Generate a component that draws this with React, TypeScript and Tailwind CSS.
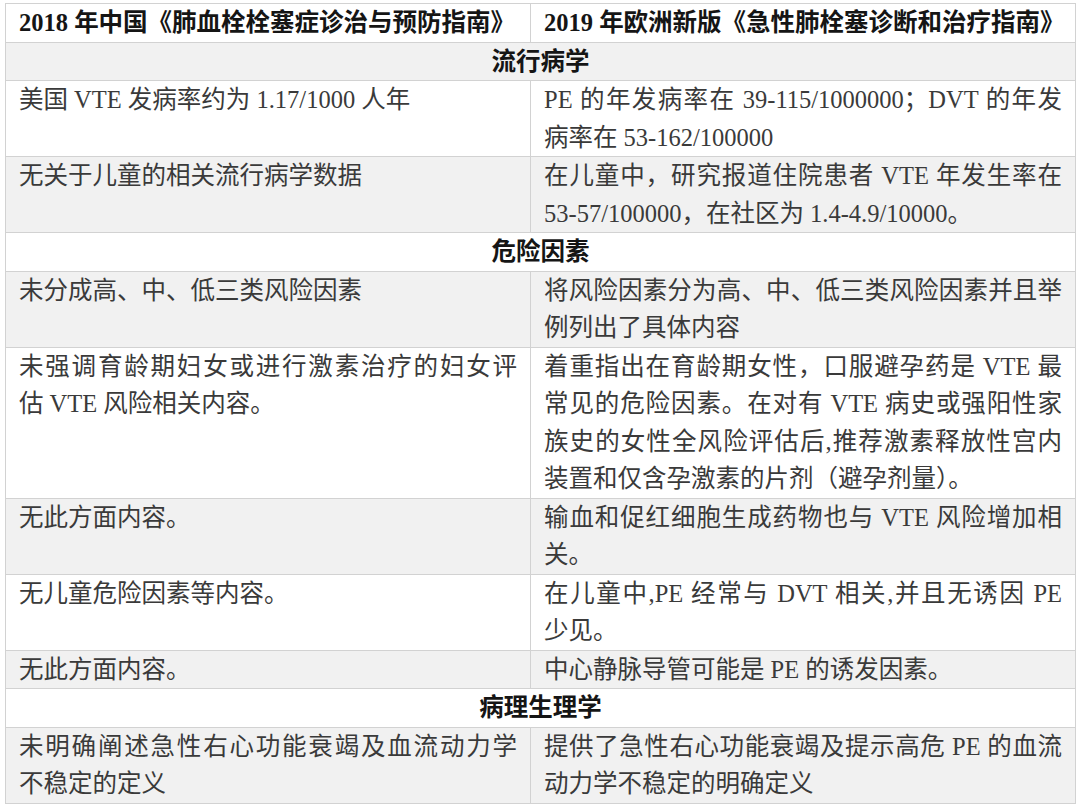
import React from 'react';

type Row =
  | { kind: 'section'; title: string }
  | { kind: 'pair'; left: string[]; right: string[] };

// Each inner array is one printed line, so the breaks match the source table
const rows: Row[] = [
  { kind: 'section', title: '流行病学' },
  {
    kind: 'pair',
    left: ['美国 VTE 发病率约为 1.17/1000 人年'],
    right: ['PE 的年发病率在 39-115/1000000；DVT 的年发', '病率在 53-162/100000'],
  },
  {
    kind: 'pair',
    left: ['无关于儿童的相关流行病学数据'],
    right: ['在儿童中，研究报道住院患者 VTE 年发生率在', '53-57/100000，在社区为 1.4-4.9/10000。'],
  },
  { kind: 'section', title: '危险因素' },
  {
    kind: 'pair',
    left: ['未分成高、中、低三类风险因素'],
    right: ['将风险因素分为高、中、低三类风险因素并且举', '例列出了具体内容'],
  },
  {
    kind: 'pair',
    left: ['未强调育龄期妇女或进行激素治疗的妇女评', '估 VTE 风险相关内容。'],
    right: [
      '着重指出在育龄期女性，口服避孕药是 VTE 最',
      '常见的危险因素。在对有 VTE 病史或强阳性家',
      '族史的女性全风险评估后,推荐激素释放性宫内',
      '装置和仅含孕激素的片剂（避孕剂量）。',
    ],
  },
  {
    kind: 'pair',
    left: ['无此方面内容。'],
    right: ['输血和促红细胞生成药物也与 VTE 风险增加相', '关。'],
  },
  {
    kind: 'pair',
    left: ['无儿童危险因素等内容。'],
    right: ['在儿童中,PE 经常与 DVT 相关,并且无诱因 PE', '少见。'],
  },
  {
    kind: 'pair',
    left: ['无此方面内容。'],
    right: ['中心静脉导管可能是 PE 的诱发因素。'],
  },
  { kind: 'section', title: '病理生理学' },
  {
    kind: 'pair',
    left: ['未明确阐述急性右心功能衰竭及血流动力学', '不稳定的定义'],
    right: ['提供了急性右心功能衰竭及提示高危 PE 的血流', '动力学不稳定的明确定义'],
  },
];

const Lines: React.FC<{ lines: string[] }> = ({ lines }) => (
  <>
    {lines.map((line, i) => (
      <div
        key={i}
        className={i < lines.length - 1 ? 'text-justify [text-align-last:justify]' : 'text-left'}
      >
        {line}
      </div>
    ))}
  </>
);

export default function App() {
  const cell = 'border border-[#d2d2d2] px-[13px] py-0 align-top';

  return (
    <div className="min-h-screen bg-white pt-[3px] pl-[5px] font-['Liberation_Serif','Noto_Sans_CJK_SC',serif] text-[24.5px] leading-[37.5px] text-[#3a3a3a]">
      <table className="w-[1070px] table-fixed border-collapse">
        <colgroup>
          <col className="w-[525px]" />
          <col className="w-[545px]" />
        </colgroup>
        <tbody>
          <tr className="bg-white">
            <th className={`${cell} whitespace-nowrap text-left font-bold text-[#151515]`}>
              2018 年中国《肺血栓栓塞症诊治与预防指南》
            </th>
            <th className={`${cell} whitespace-nowrap text-left font-bold text-[#151515]`}>
              2019 年欧洲新版《急性肺栓塞诊断和治疗指南》
            </th>
          </tr>
          {rows.map((row, i) => {
            const bg = i % 2 === 0 ? 'bg-[#f1f1f1]' : 'bg-white';
            if (row.kind === 'section') {
              return (
                <tr key={i} className={bg}>
                  <td colSpan={2} className={`${cell} text-center font-bold text-[#151515]`}>
                    {row.title}
                  </td>
                </tr>
              );
            }
            return (
              <tr key={i} className={bg}>
                <td className={cell}>
                  <Lines lines={row.left} />
                </td>
                <td className={cell}>
                  <Lines lines={row.right} />
                </td>
              </tr>
            );
          })}
        </tbody>
      </table>
    </div>
  );
}
